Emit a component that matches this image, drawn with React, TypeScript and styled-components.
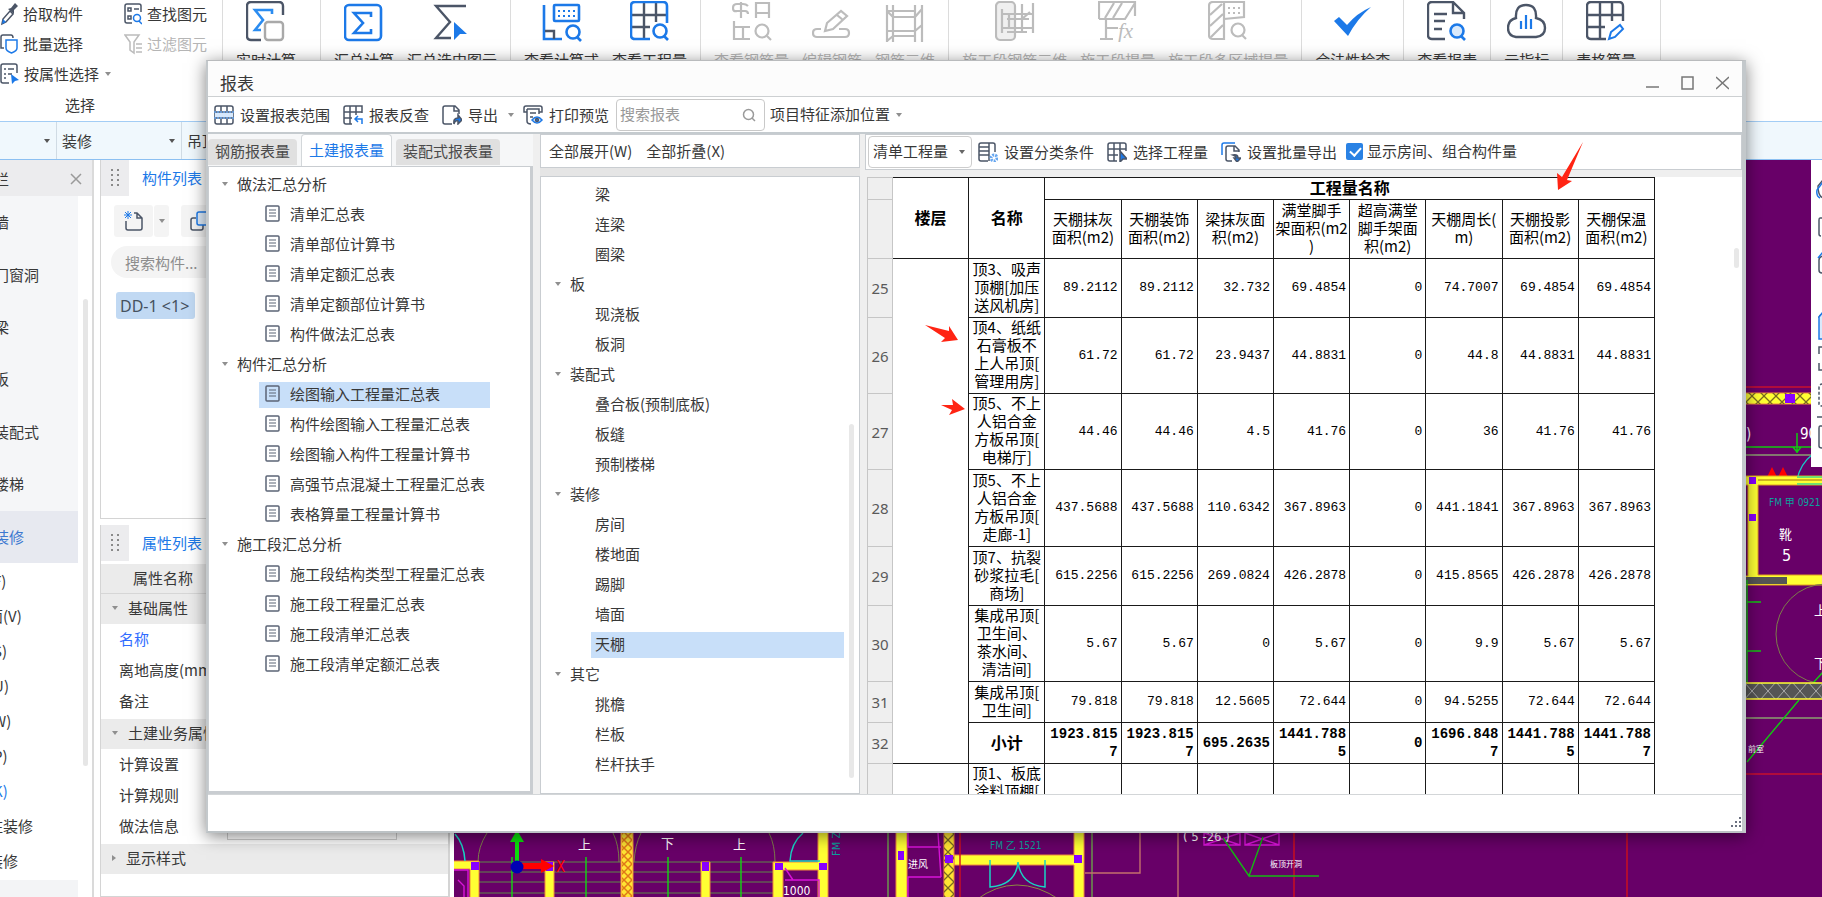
import React from "react";
import styled, { createGlobalStyle, css } from "styled-components";

const ui = `"Noto Sans CJK SC", "Noto Sans", sans-serif`;
const mono = `"Liberation Mono", "Noto Sans CJK SC", monospace`;
const dark = "#4b5567";
const blue = "#1c79e8";
const grey = "#bcbcbc";

const GlobalStyle = createGlobalStyle`
  * { box-sizing: border-box; }
  body { margin: 0; font-family: ${ui}; font-size: 15px; line-height: 20px; color: #383838; background: #fff; overflow: hidden; }
  button, input, select { font: inherit; color: inherit; margin: 0; }
  ul { list-style: none; margin: 0; padding: 0; }
`;

/* ---------- shared parts ---------- */

const Page = styled.div`
  position: relative;
  display: flex;
  flex-direction: column;
  min-height: 100vh;
  overflow: hidden;
`;

const PlainButton = styled.button`
  display: flex;
  align-items: center;
  padding: 0;
  border: 0;
  background: none;
  white-space: nowrap;
`;

const Caret = styled.span<{ $right?: boolean; $color?: string }>`
  flex: none;
  width: 0;
  height: 0;
  margin: 0 1px;
  border: 3px solid transparent;
  ${(p) =>
    p.$right
      ? css`border-left: 4px solid ${p.$color ?? "#8f8f8f"}; border-right: 0;`
      : css`border-top: 4px solid ${p.$color ?? "#8f8f8f"}; border-bottom: 0;`}
`;

const Svg = styled.svg`
  display: block;
  flex: none;
  fill: none;
  stroke-width: 1.5;
`;

/* ---------- ribbon ---------- */

const Ribbon = styled.header`
  display: flex;
  height: 121px;
  background: #fff;
  white-space: nowrap;
`;

const SelectGroup = styled.section`
  flex: none;
  width: 223px;
  border-right: 1px solid #dcdcdc;
`;

const SelectGrid = styled.div`
  display: grid;
  grid-template-columns: 124px 1fr;
  grid-auto-rows: 30px;
  overflow: hidden;
`;

const SmallTool = styled(PlainButton)<{ $muted?: boolean }>`
  gap: 5px;
  padding-bottom: 3px;
  color: ${(p) => (p.$muted ? "#b5b5b5" : "#383838")};
`;

const GroupCaption = styled.div`
  margin-right: 62px;
  line-height: 30px;
  text-align: center;
`;

const RibbonGroup = styled.section<{ $wide?: boolean }>`
  display: flex;
  gap: 13px;
  padding: 1px ${(p) => (p.$wide ? 24 : 13)}px 0 13px;
  border-right: 1px solid #dcdcdc;
`;

const BigTool = styled(PlainButton)<{ $muted?: boolean }>`
  flex-direction: column;
  gap: 8px;
  height: 72px;
  justify-content: flex-start;
  color: ${(p) => (p.$muted ? "#b5b5b5" : "#383838")};
`;

const OptionBar = styled.div`
  display: flex;
  height: 39px;
  border-top: 1px solid #a3cdf5;
  border-bottom: 1px solid #8cc0f2;
  background: #f0f8fd;
`;

const Combo = styled(PlainButton)<{ $width: number }>`
  justify-content: space-between;
  width: ${(p) => p.$width}px;
  padding: 0 5px 0 5px;
  border-right: 1px solid #d0dbe4;
`;

/* ---------- ribbon icons ---------- */

const ribbonIcons: Record<string, React.ReactNode> = {
  live: (
    <>
      <path d="M37 14V5q0-4-4-4H5Q1 1 1 5v30q0 4 4 4h10" stroke={dark} strokeWidth="2.4" />
      <path d="M26 13V9H9l8 10-8 10h6" stroke="#2b8cf0" strokeWidth="2.6" />
      <rect x="19" y="21" width="18" height="18" rx="3" stroke="#a9a9a9" strokeWidth="2.4" />
    </>
  ),
  sum: (
    <>
      <rect x="1" y="4" width="36" height="35" rx="4" stroke={blue} strokeWidth="2.6" />
      <path d="M27 16v-4H10l9 10-9 10h17v-4" stroke={blue} strokeWidth="2.6" />
    </>
  ),
  sumPick: (
    <>
      <path d="M34 5H4l14 16L4 37h15" stroke={dark} strokeWidth="2.4" />
      <path d="M22 21l13 12-7 0-6 6z" fill={blue} />
    </>
  ),
  formula: (
    <>
      <path d="M2 4v34h18" stroke={blue} strokeWidth="2.6" />
      <path d="M3 30h9v8" stroke={dark} strokeWidth="2.4" />
      <rect x="12" y="4" width="25" height="16" rx="1" stroke={blue} strokeWidth="2.6" />
      <path d="M16 10h18M16 15h18" stroke={blue} strokeWidth="2" strokeDasharray="2 3" />
      <circle cx="31" cy="31" r="6.5" stroke={blue} strokeWidth="2.6" />
      <path d="M35 36l4 4" stroke={blue} strokeWidth="2.6" />
    </>
  ),
  quantity: (
    <>
      <path d="M14 2v36M26 2v19M2 14h35M2 26h18" stroke={dark} strokeWidth="2.4" />
      <path d="M37 22V5q0-4-4-4H5Q1 1 1 5v29q0 4 4 4h15" stroke={blue} strokeWidth="2.6" />
      <circle cx="30" cy="30" r="6.5" stroke={blue} strokeWidth="2.6" />
      <path d="M34 35l4 4" stroke={blue} strokeWidth="2.6" />
    </>
  ),
  rebar: (
    <g stroke={grey} strokeWidth="2.2">
      <path d="M9 1v16M16 5Q14 3 11 3H5Q1 3 1 7t4 3h8q3 0 3 3M24 17V2h13v15M24 12h13M2 20v18h16M2 26h16M11 26v12" />
      <circle cx="30" cy="30" r="6.5" />
      <path d="M35 35l4 4" />
    </g>
  ),
  editBar: (
    <g stroke={grey} strokeWidth="2.2">
      <path d="M13 30l2-8L29 10l6 5-14 13zM25 14l6 5" />
      <path d="M9 28H5q-4 0-4 4t4 4h28q4 0 4-4t-4-4h-6" />
    </g>
  ),
  bar3d: (
    <g stroke={grey} strokeWidth="2.2">
      <path d="M2 4v37M8 4v37M30 4v37M37 4v37M2 10h28M8 16h22M2 30h28M8 35h22M30 16l7-8M8 35l-6 5M30 30l7-6M2 10l6 6" />
    </g>
  ),
  stage3d: (
    <g stroke={grey} strokeWidth="2.2">
      <rect x="1" y="1" width="19" height="38" rx="4" fill="#efefef" />
      <path d="M7 8v24M14 12v16M27 3v28M38 2v30M8 13h30M12 18h22M8 27h30M12 31h20M27 18l8-7" />
    </g>
  ),
  stageQty: (
    <>
      <g stroke={grey} strokeWidth="2.2">
        <path d="M1 18V1h36v14M1 18h26l10-16M7 17L16 2M15 17l9-15M8 18v20M8 27h12M2 38h13" />
      </g>
      <text x="20" y="37" fontFamily="Liberation Serif" fontStyle="italic" fontSize="21" fill={grey}>fx</text>
    </>
  ),
  region: (
    <g stroke={grey} strokeWidth="2.2">
      <path d="M16 1H5Q1 1 1 5v29q0 4 4 4h11zM2 14L14 3M2 25l13-12M3 36l12-12M16 1h20v15l-20 2" />
      <path d="M20 7h14M20 12h14" strokeDasharray="2 3" />
      <circle cx="30" cy="29" r="6.5" />
      <path d="M34 34l4 4" />
    </g>
  ),
  check: <path d="M1 20l5-4 8 8Q24 12 38 6 24 18 15 35z" fill={blue} />,
  report: (
    <>
      <path d="M37 18v-6L26 1H5Q1 1 1 5v29q0 4 4 4h13M26 2v10h10" stroke={dark} strokeWidth="2.4" />
      <path d="M7 13h13M7 20h11M7 28h8" stroke={dark} strokeWidth="2.4" />
      <circle cx="30" cy="30" r="6.5" stroke={blue} strokeWidth="2.6" fill="#d9e9fb" />
      <path d="M34 35l4 4" stroke={blue} strokeWidth="2.6" />
    </>
  ),
  cloud: (
    <>
      <path d="M9 36Q1 35 1 27t8-10Q8 4 19 4t10 13q9 2 9 10t-9 9z" stroke={dark} strokeWidth="2.4" />
      <path d="M14 28v-8M19 28V14M24 28V18" stroke={blue} strokeWidth="2.2" />
    </>
  ),
  sheet: (
    <>
      <path d="M37 20V5q0-4-4-4H5Q1 1 1 5v29q0 4 4 4h15M14 1v37M26 1v19M1 14h36M1 26h18" stroke={dark} strokeWidth="2.4" />
      <path d="M23 38l2-7 9-7 3 4-8 8z" stroke={blue} strokeWidth="2" />
    </>
  ),
};

type Tool = [icon: string, label: string, muted?: boolean];
const ribbonGroups: { wide?: boolean; tools: Tool[] }[] = [
  { wide: true, tools: [["live", "实时计算"]] },
  { tools: [["sum", "汇总计算"], ["sumPick", "汇总选中图元"]] },
  { tools: [["formula", "查看计算式"], ["quantity", "查看工程量"]] },
  { tools: [["rebar", "查看钢筋量", true], ["editBar", "编辑钢筋", true], ["bar3d", "钢筋三维", true]] },
  { tools: [["stage3d", "施工段钢筋三维", true], ["stageQty", "施工段提量", true], ["region", "施工段多区域提量", true]] },
  { tools: [["check", "合法性检查"]] },
  { tools: [["report", "查看报表"]] },
  { tools: [["cloud", "云指标"]] },
  { wide: true, tools: [["sheet", "表格算量"]] },
];

function RibbonBar() {
  return (
    <Ribbon>
      <SelectGroup>
        <SelectGrid>
          <SmallTool>
            <Svg width="18" height="24">
              <path d="M2 22l1-5 7-8 3 3-7 8z" stroke={dark} />
              <path d="M8 7l3-1 4-5 3 3-4 4v4z" fill={dark} />
              <path d="M2 22l1-5 3 3z" fill={blue} />
            </Svg>
            拾取构件
          </SmallTool>
          <SmallTool>
            <Svg width="18" height="24">
              <path d="M17 10V4q0-2-2-2H3Q1 2 1 4v15q0 2 2 2h5" stroke={dark} />
              <path d="M4 6h3v3H4zM4 14h3v3H4zM10 7h5" stroke={dark} />
              <circle cx="13" cy="16" r="3.5" stroke={blue} />
              <path d="M15 19l3 3" stroke={blue} />
            </Svg>
            查找图元
          </SmallTool>
          <SmallTool>
            <Svg width="18" height="24">
              <path d="M4 16H1V5q0-2 2-2h8q2 0 2 3" stroke={dark} />
              <path d="M6 8h11v8q0 3-5.500 5Q6 19 6 16z" stroke={blue} />
            </Svg>
            批量选择
          </SmallTool>
          <SmallTool $muted>
            <Svg width="18" height="24">
              <path d="M1 3h14l-5 7v11l-4-3v-8zM12 12h6M12 16h6M12 20h6" stroke={grey} />
            </Svg>
            过滤图元
          </SmallTool>
          <SmallTool>
            <Svg width="19" height="24">
              <path d="M17 11V4q0-2-2-2H3Q1 2 1 4v15q0 2 2 2h6M4 7h2M8 7h6M4 12h2M8 12h4M4 16h2" stroke={dark} />
              <path d="M11 12l8 6-4 1-3 3z" fill={blue} />
            </Svg>
            按属性选择
            <Caret />
          </SmallTool>
        </SelectGrid>
        <GroupCaption>选择</GroupCaption>
      </SelectGroup>
      {ribbonGroups.map((group, i) => (
        <RibbonGroup key={i} $wide={group.wide}>
          {group.tools.map(([icon, label, muted]) => (
            <BigTool key={label} $muted={muted}>
              <Svg width="40" height="41">{ribbonIcons[icon]}</Svg>
              {label}
            </BigTool>
          ))}
        </RibbonGroup>
      ))}
    </Ribbon>
  );
}

/* ---------- workspace behind the dialog ---------- */

const Workspace = styled.div`
  display: flex;
  flex: 1;
  min-height: 0;
`;

const Nav = styled.nav`
  flex: none;
  display: flex;
  flex-direction: column;
  width: 94px;
  border-right: 2px solid #dadada;
  overflow: hidden;
`;

const PanelHead = styled.div`
  display: flex;
  align-items: center;
  height: 36px;
  background: #ececee;
`;

const NavHead = styled(PanelHead)`
  justify-content: space-between;
  margin-left: -36px;
  padding-right: 10px;
  padding-top: 2px;
`;

const NavBody = styled.div`
  display: flex;
  flex: 1;
`;

const NavList = styled.div`
  display: flex;
  flex-direction: column;
  width: 78px;
`;

const Categories = styled.div`
  display: flex;
  flex-direction: column;
  height: 367px;
  background: #f5f6f8;
`;

const Category = styled(PlainButton)<{ $active?: boolean }>`
  flex: 1;
  text-indent: -6px;
  color: ${(p) => (p.$active ? "#3c78d0" : "#383838")};
  background: ${(p) => (p.$active ? "#e7e9f0" : "none")};
`;

const SubList = styled.div`
  flex: none;
  padding: 0 0 2px;
  margin-left: -42px;
`;

const SubItem = styled(PlainButton)<{ $active?: boolean }>`
  height: 35px;
  color: ${(p) => (p.$active ? "#1c79e8" : "#383838")};
`;

const NavFoot = styled.div`
  flex: 1;
  background: #f3f4f6;
`;

const NavScroll = styled.div`
  width: 5px;
  height: 467px;
  margin: 103px 0 0 5px;
  border-radius: 3px;
  background: #e6e6e6;
`;

const Side = styled.aside`
  flex: none;
  display: flex;
  flex-direction: column;
  gap: 6px;
  width: 350px;
  margin: 0 4px 0 6px;
`;

const Panel = styled.section<{ $height?: number }>`
  ${(p) => (p.$height ? `height: ${p.$height}px;` : "flex: 1;")}
  border: 1px solid #d4d4d4;
  border-right-width: 2px;
  border-top: 0;
`;

const Grip = styled.div`
  display: flex;
  justify-content: center;
  align-items: center;
  width: 28px;
  height: 36px;
  background: #ececee;
`;

const PanelTabs = styled.div`
  display: flex;
  color: #1c79e8;
`;

const PanelTab = styled.div`
  padding: 8px 13px;
`;

const PartTools = styled.div`
  display: flex;
  gap: 12px;
  padding: 9px 0 9px 13px;
`;

const PartButtons = styled.div`
  display: flex;
  gap: 1px;
`;

const PartButton = styled(PlainButton)<{ $width: number }>`
  justify-content: center;
  width: ${(p) => p.$width}px;
  height: 32px;
  border-radius: 3px;
  background: #f4f4f4;
`;

const PartSearch = styled.input`
  display: block;
  width: 300px;
  height: 32px;
  margin-left: 10px;
  padding: 0 14px;
  border: 0;
  border-radius: 16px;
  background: #f4f4f4;
  &::placeholder { color: #8d8d8d; opacity: 1; }
`;

const PartChip = styled(PlainButton)`
  height: 27px;
  margin: 14px 0 0 15px;
  padding: 0 6px 0 4px;
  border-radius: 3px;
  font-family: "Noto Sans", sans-serif;
  font-size: 16px;
  color: #46525f;
  background: #c1d9f3;
`;

const PropHead = styled.div`
  height: 30px;
  margin-top: 3px;
  padding-left: 32px;
  line-height: 27px;
  background: #ebebeb;
  border-bottom: 1px solid #d6d6d6;
`;

const PropGroup = styled.div`
  display: flex;
  align-items: center;
  gap: 9px;
  height: 30px;
  padding: 0 0 2px 10px;
  background: #ebebeb;
`;

const PropBody = styled.div`
  padding: 1px 0;
`;

const PropRow = styled.div<{ $link?: boolean }>`
  display: flex;
  height: 31px;
  padding-left: 18px;
  line-height: 28px;
  white-space: nowrap;
  color: ${(p) => (p.$link ? "#2f6bff" : "#383838")};
`;

const PropLabel = styled.label`
  width: 108px;
`;

const PropInput = styled.input`
  width: 170px;
  height: 28px;
  padding: 0 4px;
  border: 1px solid #cfcfcf;
  background: #fff;
`;

const Canvas = styled.main`
  position: relative;
  flex: 1;
  overflow: hidden;
  background: #680068;
`;

const Drawing = styled.svg`
  position: absolute;
  left: 0;
  top: 0;
  fill: none;
`;

const ViewTools = styled.div`
  position: absolute;
  right: 0;
  top: 0;
  width: 11px;
  height: 307px;
  background: #fff;
`;

function GripDots() {
  return (
    <Grip>
      <Svg width="10" height="18">
        {[0, 5, 10, 15].map((y) => (
          <path key={y} d={`M1 ${y}h2v2h-2zM7 ${y}h2v2h-2z`} fill="#8a8a8a" />
        ))}
      </Svg>
    </Grip>
  );
}

function CadDrawing() {
  const Y = "#ffff33";
  const P = "#8800ff";
  return (
    <Drawing width="1368" height="737" viewBox="454 160 1368 737">
      <defs>
        <pattern id="cross" width="12" height="12" patternUnits="userSpaceOnUse">
          <path d="M0 0l12 12M12 0L0 12" stroke="#7a6a20" strokeWidth="1.3" />
        </pattern>
        <pattern id="crossGrey" width="16" height="18" y="682" patternUnits="userSpaceOnUse">
          <path d="M0 0l16 18M16 0L0 18" stroke="#a8a8a8" strokeWidth="1" />
        </pattern>
        <pattern id="dots" width="8" height="8" patternUnits="userSpaceOnUse">
          <path d="M0 0l8 8M8 0L0 8" stroke="#e07818" strokeWidth="1.5" />
        </pattern>
      </defs>

      {/* stairs */}
      <path d="M479 862h296M479 872h296M479 882h296M479 893h296" stroke="#5f8748" />
      <path d="M512 857v40M586 857v40M668 857v40M741 857v40" stroke="#12d812" strokeWidth="1.4" />
      <path d="M487 833q-9 14-9 29M613 833q6 12 6 29M641 833q-6 12-7 29M769 833q6 12 6 29" stroke="#7d7d4a" />

      {/* walls */}
      <g stroke="#f08a3c">
        <path d="M450 861h29v40h-9v-32h-20z" fill={Y} />
        <path d="M545 862h9v40h-9zM701 862h9v40h-9z" fill={Y} />
        <path d="M818 828h10v80h-10v-38h-35v38h-10v-46h45z" fill={Y} />
        <path d="M896 828h11v80h-11z" fill={Y} />
        <path d="M954 855h120v-30h10v80h-10v-40h-120z" fill={Y} />
        <path d="M621 828h12v80h-12zM944 828h10v80h-10z" fill="#ffe433" />
      </g>
      <path d="M622 828h10v80h-10z" fill="url(#dots)" />
      <path d="M944 828h10v80h-10z" fill="url(#cross)" />
      <path
        d="M471 862h8v8h-8zM546 862h7v9h-7zM702 862h7v9h-7zM775 863h8v7h-8zM819 863h8v7h-8zM898 851h6v9h-6zM945 855h8v8h-8zM1074 855h8v8h-8z"
        fill={P}
      />

      {/* doors and rooms */}
      <path d="M455 834q9 10 10 27M803 833q-12 10-13 28h30M990 860v27q26-2 28-25 3 23 27 25v-27" stroke="#18d4c4" strokeWidth="1.5" />
      <path d="M976 900q40-30 84 0" stroke="#8b8b40" />
      <path d="M454 870h14v30M458 880l6 6v12M785 880h34v20M785 868l8 12M908 833v14h33M908 897v-20h33M938 833l3 44M1204 833v12h36v-12l-36 12 36 0-36-12M1245 833v12h34v-12l-34 12 34 0-34-12" stroke="#d813d8" strokeWidth="1.4" />
      <path d="M888 833v64M1092 833v64" stroke="#6ba04c" strokeWidth="1.4" />
      <path d="M1085 873h55v-40M1178 833v64" stroke="#c4706c" strokeWidth="1.4" />
      <path d="M960 833v64M1294 833v64M1627 833v64" stroke="#d0101c" strokeWidth="1.4" />
      <path d="M1223 838l26 38 14-39M1249 876h70" stroke="#14b814" strokeWidth="1.4" />

      {/* axis marker */}
      <path d="M515 862v-20h-5l7-12 7 12h-5v20z" fill="#0be00b" />
      <path d="M522 863h19v-4l13 7-13 7v-4h-19z" fill="#f00" />
      <circle cx="517" cy="867" r="6.500" fill="#0000b4" />

      {/* wing on the right */}
      <path d="M1746 387h76M1746 774h76" stroke="#c8102e" strokeWidth="1.6" />
      <path d="M1740 393h90v11h-90z" fill={Y} stroke="#f08a3c" />
      <path d="M1740 393h90v11h-90z" fill="url(#cross)" />
      <path d="M1746 447h76M1797 433v20M1793 447l8 0-4 5z" stroke="#12c812" strokeWidth="1.5" />
      <path d="M1746 455h76M1746 718h76" stroke="#8aa070" strokeWidth="1.4" />
      <path d="M1797 480q3-16 16-26" stroke="#18c8c8" strokeWidth="1.4" />
      <path d="M1767 477l5-10 5 10zM1778 477l5-10 5 10z" fill="#f00" />
      <path d="M1740 476h90v9h-72v90h72v10h-90v-9h8v-91h-8z" fill={Y} stroke="#e0a020" />
      <path d="M1758 480h64" stroke="#a06a10" />
      <path d="M1797 477h25M1797 484h25" stroke="#70e070" strokeWidth="2" />
      <path d="M1746 577h41v7h-41z" fill="#555" />
      <path d="M1749 477h7v7h-7zM1749 514h7v7h-7zM1785 394h10v9h-10z" fill={P} />
      <circle cx="1826" cy="634" r="50" stroke="#7d7d4a" />
      <path d="M1747 580v104M1747 602h14M1747 651h14M1799 700l-52 62M1813 683l10-11" stroke="#12c812" strokeWidth="1.4" />
      <path d="M1740 683h90v16h-90z" fill="#555" />
      <path d="M1740 683h90v16h-90z" fill="url(#crossGrey)" />
      <path d="M1740 683h90M1740 699h90" stroke={Y} strokeWidth="1.6" />

      <g fontFamily='"Liberation Sans Narrow", "DejaVu Sans Condensed", "Noto Sans CJK SC"' fontSize="13" fill="#fff">
        <text x="578" y="849">上</text>
        <text x="661" y="848">下</text>
        <text x="733" y="849">上</text>
        <text x="556" y="872" fill="#f00" fontSize="15">X</text>
        <text x="783" y="895" fontSize="12">1000</text>
        <text x="908" y="868" fontSize="10">进风</text>
        <text x="1183" y="841">( 5 -26 )</text>
        <text x="1270" y="867" fontSize="8">板顶开洞</text>
        <text x="990" y="849" fontSize="10" fill="#0aa09c">FM 乙 1521</text>
        <text x="1746" y="439" fontSize="15">)</text>
        <text x="1800" y="439" fontSize="15">90</text>
        <text x="1769" y="506" fontSize="10" fill="#0aa09c">FM 甲 0921</text>
        <text x="1779" y="539">靴</text>
        <text x="1782" y="561" fontSize="16">5</text>
        <text x="1814" y="615">上</text>
        <text x="1814" y="668">下</text>
        <text x="1748" y="752" fontSize="8">前室</text>
        <text x="0" y="0" fontSize="11" fill="#0aa09c" transform="translate(840 856) rotate(-90)">FM Z</text>
      </g>
    </Drawing>
  );
}

function WorkspaceArea() {
  const categories = ["墙", "门窗洞", "梁", "板", "装配式", "楼梯", "装修"];
  const subs = ["房间(F)", "楼地面(V)", "踢脚(S)", "墙裙(U)", "墙面(W)", "天棚(P)", "吊顶(K)", "独立柱装修", "单梁装修"];
  return (
    <Workspace>
      <Nav>
        <NavHead>
          导航栏
          <Svg width="12" height="12" stroke="#9a9a9a"><path d="M1 1l10 10M11 1L1 11" /></Svg>
        </NavHead>
        <NavBody>
          <NavList>
            <Categories>
              {categories.map((c) => <Category key={c} $active={c === "装修"}>{c}</Category>)}
            </Categories>
            <SubList>
              {subs.map((s) => <SubItem key={s} $active={s === "吊顶(K)"}>{s}</SubItem>)}
            </SubList>
            <NavFoot />
          </NavList>
          <NavScroll />
        </NavBody>
      </Nav>
      <Side>
        <Panel $height={359}>
          <PanelTabs><GripDots /><PanelTab>构件列表</PanelTab></PanelTabs>
          <PartTools>
            <PartButtons>
              <PartButton $width={39} aria-label="新建">
                <Svg width="20" height="22" stroke={dark}>
                  <path d="M2 11v7q0 2 2 2h12q2 0 2-2V8l-5-5h-3M13 3v5h5" />
                  <path d="M1 2l6 6M7 2L1 8M4 1v8M0 5h8" stroke={blue} strokeWidth="1" />
                </Svg>
              </PartButton>
              <PartButton $width={15} aria-label="更多"><Caret /></PartButton>
            </PartButtons>
            <PartButton $width={39} aria-label="复制">
              <Svg width="22" height="22" stroke={dark}>
                <path d="M6 8H3Q1 8 1 10v8q0 2 2 2h8q2 0 2-2v-3" />
                <rect x="7" y="2" width="13" height="13" rx="2" stroke={blue} fill="#e1eefc" />
              </Svg>
            </PartButton>
          </PartTools>
          <PartSearch placeholder="搜索构件..." aria-label="搜索构件" />
          <PartChip>DD-1 &lt;1&gt;</PartChip>
        </Panel>
        <Panel>
          <PanelTabs><GripDots /><PanelTab>属性列表</PanelTab></PanelTabs>
          <PropHead>属性名称</PropHead>
          <PropGroup><Caret />基础属性</PropGroup>
          <PropBody>
            <PropRow $link>名称</PropRow>
            <PropRow>离地高度(mm)</PropRow>
            <PropRow>备注</PropRow>
          </PropBody>
          <PropGroup><Caret />土建业务属性</PropGroup>
          <PropBody>
            <PropRow>计算设置</PropRow>
            <PropRow>计算规则</PropRow>
            <PropRow>
              <PropLabel htmlFor="method">做法信息</PropLabel>
              <PropInput id="method" />
            </PropRow>
          </PropBody>
          <PropGroup><Caret $right />显示样式</PropGroup>
        </Panel>
      </Side>
      <Canvas>
        <CadDrawing />
        <ViewTools>
          <Svg width="11" height="307" stroke={dark}>
            <path d="M12 20L7 26q0 10 5 12" />
            <path d="M12 22L6 30q-1 6 3 8" stroke={blue} />
            <path d="M12 58H9q-1 0-1 2v14q0 2 2 2M12 96q-4 1-4 4v10q0 3 3 3M12 154q-4 1-4 4" />
            <path d="M7 98l5-6M8 157l4-5v27H8z" stroke={blue} fill="#d9e9fb" />
            <path d="M12 187H8v7M8 203v7h4" />
            <path d="M12 224q-4 0-4 4v16q0 2 3 2" strokeDasharray="3 2" />
            <path d="M6 257h6M12 266H9q-1 0-1 2v18q0 2 3 2" />
          </Svg>
        </ViewTools>
      </Canvas>
    </Workspace>
  );
}

/* ---------- report dialog ---------- */

const Dialog = styled.section`
  position: absolute;
  left: 206px;
  top: 60px;
  right: 76px;
  bottom: 64px;
  display: flex;
  flex-direction: column;
  border: 1px solid #b4b6b8;
  border-width: 1px 4px 2px 2px;
  border-color: #b9bbbd #c3c8cb #bcc2c5 #c3c8cb;
  background: #efefef;
  box-shadow: 0 3px 16px rgba(0, 0, 0, 0.5);
`;

const TitleBar = styled.header`
  display: flex;
  justify-content: space-between;
  height: 36px;
  padding: 12px 13px 0 12px;
  font-size: 17px;
  background: #fcfcfc;
  border-bottom: 1px solid #cdd0d2;
`;

const WindowButtons = styled.div`
  display: flex;
  gap: 22px;
`;

const WindowButton = styled(PlainButton)`
  width: 13px;
  height: 20px;
`;

const Toolbar = styled.div`
  display: flex;
  align-items: center;
  height: 37px;
  padding: 0 6px;
  background: #fff;
  border-bottom: 2px solid #c5cbcf;
`;

const ToolButton = styled(PlainButton)<{ $flush?: boolean }>`
  gap: 6px;
  margin-right: ${(p) => (p.$flush ? 0 : 13)}px;
`;

const DropButton = styled(PlainButton)<{ $width: number }>`
  justify-content: center;
  width: ${(p) => p.$width}px;
  height: 24px;
`;

const SearchBox = styled.label`
  position: relative;
  display: block;
  width: 149px;
  height: 32px;
  margin: 0 5px 0 -6px;
`;

const SearchInput = styled.input`
  width: 100%;
  height: 32px;
  padding: 0 28px 2px 3px;
  border: 1px solid #c9c9c9;
  border-radius: 4px;
  background: #fff;
  &::placeholder { color: #999; opacity: 1; }
`;

const SearchGlyph = styled(Svg)`
  position: absolute;
  right: 9px;
  top: 9px;
`;

const FeatureButton = styled(PlainButton)`
  padding-bottom: 2px;
`;

const Body = styled.div`
  display: flex;
  flex: 1;
  min-height: 0;
`;

const TreeColumn = styled.div`
  flex: none;
  display: flex;
  flex-direction: column;
  width: 325px;
`;

const Tabs = styled.div`
  display: flex;
  align-items: flex-end;
  gap: 4px;
  height: 32px;
  background: #f6f7f8;
`;

const Tab = styled.button<{ $active?: boolean }>`
  height: ${(p) => (p.$active ? 32 : 26)}px;
  margin-bottom: ${(p) => (p.$active ? 0 : 1)}px;
  padding: 0 7px 2px;
  border: ${(p) => (p.$active ? "1px solid #d3d7da" : "0")};
  border-width: ${(p) => (p.$active ? "1px 1px 0" : "0")};
  border-radius: 4px 4px 0 0;
  white-space: nowrap;
  color: ${(p) => (p.$active ? "#1c79e8" : "#4a4a4a")};
  background: ${(p) => (p.$active ? "#fff" : "#e0e0e0")};
`;

const TreePane = styled.div`
  flex: 1;
  min-height: 0;
  padding-top: 3px;
  background: #fff;
  border: 1px solid #c9cdd1;
  border-width: 1px 3px 3px 1px;
`;

const TreeGroup = styled.li<{ $indent: number }>`
  display: flex;
  align-items: center;
  gap: 8px;
  height: 30px;
  padding: 0 0 2px ${(p) => p.$indent}px;
`;

const TreeLeaf = styled.li`
  display: flex;
  align-items: center;
  height: 30px;
  padding-left: 50px;
`;

const LeafButton = styled(PlainButton)<{ $active?: boolean; $width: number; $pad: number }>`
  gap: 10px;
  width: ${(p) => p.$width}px;
  height: 26px;
  padding: 0 0 2px ${(p) => p.$pad}px;
  background: ${(p) => (p.$active ? "#c8dff9" : "none")};
`;

const PartColumn = styled.div`
  flex: none;
  display: flex;
  flex-direction: column;
  width: 320px;
  margin: 0 5px 0 7px;
  background: #e5e5e5;
`;

const FoldBar = styled.div`
  display: flex;
  gap: 14px;
  height: 34px;
  margin-bottom: 8px;
  padding: 0 8px;
  background: #fff;
  border: 1px solid #c9cdd1;
`;

const PartPane = styled.div`
  display: flex;
  flex: 1;
  min-height: 0;
  overflow: hidden;
  padding-top: 3px;
  background: #fff;
  border: 1px solid #c9cdd1;
`;

const PartList = styled.ul`
  flex: 1;
`;

const PartThumb = styled.div`
  width: 5px;
  height: 354px;
  margin: 244px 5px 0 0;
  border-radius: 3px;
  background: #e8e8e8;
`;

const ReportColumn = styled.div`
  display: flex;
  flex: 1;
  flex-direction: column;
  min-width: 0;
`;

const ReportTools = styled.div`
  display: flex;
  align-items: center;
  height: 36px;
  margin-bottom: 7px;
  padding: 0 2px;
  background: #fff;
  border: 1px solid #c9cdd1;
  white-space: nowrap;
`;

const SelectBox = styled.div`
  position: relative;
  width: 104px;
  margin-right: 6px;
`;

const NativeSelect = styled.select`
  width: 100%;
  height: 32px;
  padding: 0 0 2px 4px;
  border: 1px solid #cdcdcd;
  border-radius: 4px;
  background: #fff;
  appearance: none;
`;

const SelectCaret = styled(Caret)`
  position: absolute;
  right: 6px;
  top: 14px;
`;

const CheckLabel = styled.label`
  display: flex;
  align-items: center;
  gap: 4px;
  margin-left: -4px;
  padding-bottom: 2px;
`;

const Checkbox = styled.input`
  position: relative;
  width: 17px;
  height: 17px;
  border-radius: 2px;
  background: #2a82e4;
  appearance: none;
  &::after {
    content: "";
    position: absolute;
    left: 6px;
    top: 2px;
    width: 5px;
    height: 9px;
    border: solid #fff;
    border-width: 0 2px 2px 0;
    transform: rotate(42deg);
  }
`;

const ReportPane = styled.div`
  display: flex;
  flex: 1;
  align-items: flex-start;
  justify-content: space-between;
  min-height: 0;
  margin-left: 2px;
  overflow: hidden;
  background: #fff;
`;

const ReportThumb = styled.div`
  width: 5px;
  height: 20px;
  margin: 71px 3px 0 0;
  border-radius: 3px;
  background: #e8e8e8;
`;

const Table = styled.table`
  width: 788px;
  table-layout: fixed;
  border-collapse: separate;
  border-spacing: 0;
  font-size: 15px;
  line-height: 18px;
  color: #000;
`;

const cell = css`
  padding: 0 0 3px;
  border: solid #1a1a1a;
  border-width: 0 1px 1px 0;
  text-align: center;
  white-space: pre;
`;

const Row = styled.tr<{ $height: number }>`
  height: ${(p) => p.$height}px;
`;

const Index = styled.th`
  padding: 0;
  border: solid #c6c6c6;
  border-width: 0 1px 1px 1px;
  font: 15px "Noto Sans", sans-serif;
  color: #5a5a5a;
  background: #efefef;
`;

const HeadCell = styled.th<{ $top?: boolean; $big?: boolean }>`
  ${cell}
  border-top-width: ${(p) => (p.$top ? 1 : 0)}px;
  font-size: ${(p) => (p.$big ? 16 : 15)}px;
  font-weight: ${(p) => (p.$big ? 700 : 400)};
`;

const NameCell = styled.td<{ $total?: boolean; $upper?: boolean }>`
  ${cell}
  font-size: ${(p) => (p.$total ? 16 : 15)}px;
  font-weight: ${(p) => (p.$total ? 700 : 400)};
  vertical-align: ${(p) => (p.$upper ? "top" : "middle")};
`;

const NumberCell = styled.td<{ $total?: boolean }>`
  ${cell}
  padding: 0 3px 0 2px;
  font-family: ${mono};
  font-size: ${(p) => (p.$total ? 14 : 13)}px;
  font-weight: ${(p) => (p.$total ? 700 : 400)};
  text-align: right;
  white-space: normal;
  word-break: break-all;
`;

const StatusBar = styled.footer`
  display: flex;
  justify-content: flex-end;
  align-items: flex-end;
  height: 37px;
  padding: 0 0 3px;
  background: #fff;
  border-top: 1px solid #d3d6d8;
`;

const Annotations = styled.svg`
  position: absolute;
  left: 0;
  top: 0;
  width: 100%;
  height: 100%;
  fill: #ff2413;
  pointer-events: none;
`;

const toolIcons: Record<string, React.ReactNode> = {
  range: (
    <>
      <rect x="1" y="1" width="18" height="18" rx="2" />
      <path d="M7 1v18M13 1v18" />
      <path d="M0 7h20v6H0z" fill="#d6e8fc" />
      <path d="M0 7h20M0 13h20" stroke="#6aa8f0" strokeDasharray="2 1" />
    </>
  ),
  trace: (
    <>
      <path d="M19 8V1H3Q1 1 1 3v14q0 2 2 2h6M1 7h18M1 13h8M7 1v18M13 1v9" />
      <path d="M19 19v-5h-7M15 11l-3 3 3 3" stroke={blue} />
    </>
  ),
  exportFile: (
    <>
      <path d="M17 9V5l-4-4H3Q1 1 1 3v14q0 2 2 2h7M12 1v5h5" />
      <path d="M12 19q-1-6 4-6v-3l4 5-4 4v-3q-3-1-4 3z" fill={blue} />
    </>
  ),
  print: (
    <>
      <path d="M4 7H1V3q0-2 2-2h14q2 0 2 2v4h-3M4 4h12v5M4 4v12q0 3 4 3M7 8h6M7 12h3" />
      <path d="M9 15q5-6 10 0-5 6-10 0z" stroke={blue} fill="#d9e9fb" />
      <circle cx="14" cy="15" r="1.500" fill={blue} />
    </>
  ),
  classify: (
    <>
      <path d="M17 10V3q0-2-2-2H3Q1 1 1 3v14q0 2 2 2h7M1 5h10M1 9h10M1 13h10M11 1v18" />
      <circle cx="16" cy="16" r="3" stroke="#67a7f0" strokeWidth="3" strokeDasharray="2 1" />
    </>
  ),
  pick: (
    <>
      <path d="M19 9V3q0-2-2-2H3Q1 1 1 3v14q0 2 2 2h7M1 7h18M1 13h10M7 1v18M13 1v8" />
      <path d="M13 9l7 8-4 0-3 3z" fill={blue} />
    </>
  ),
  batch: (
    <>
      <path d="M1 13V3q0-2 2-2h11" stroke={blue} />
      <path d="M18 10V8l-4-4H7Q5 4 5 6v11q0 2 2 2h4M13 4v5h5" />
      <path d="M12 13q5-1 5 3h3l-4 4-3-4h2q0-2-3-3z" fill={blue} />
    </>
  ),
};

function ToolIcon({ name }: { name: string }) {
  return <Svg width="20" height="20" stroke={dark}>{toolIcons[name]}</Svg>;
}

const reportTree: [string, string[]][] = [
  ["做法汇总分析", ["清单汇总表", "清单部位计算书", "清单定额汇总表", "清单定额部位计算书", "构件做法汇总表"]],
  ["构件汇总分析", ["绘图输入工程量汇总表", "构件绘图输入工程量汇总表", "绘图输入构件工程量计算书", "高强节点混凝土工程量汇总表", "表格算量工程量计算书"]],
  ["施工段汇总分析", ["施工段结构类型工程量汇总表", "施工段工程量汇总表", "施工段清单汇总表", "施工段清单定额汇总表"]],
];

const partTree: [string, string[]][] = [
  ["", ["梁", "连梁", "圈梁"]],
  ["板", ["现浇板", "板洞"]],
  ["装配式", ["叠合板(预制底板)", "板缝", "预制楼梯"]],
  ["装修", ["房间", "楼地面", "踢脚", "墙面", "天棚"]],
  ["其它", ["挑檐", "栏板", "栏杆扶手"]],
];

const columns = [
  "天棚抹灰\n面积(m2)", "天棚装饰\n面积(m2)", "梁抹灰面\n积(m2)", "满堂脚手\n架面积(m2\n)",
  "超高满堂\n脚手架面\n积(m2)", "天棚周长(\nm)", "天棚投影\n面积(m2)", "天棚保温\n面积(m2)",
];

const rows: { no: number; name: string; height: number; total?: boolean; values: string[] }[] = [
  { no: 25, name: "顶3、吸声\n顶棚[加压\n送风机房]", height: 59, values: ["89.2112", "89.2112", "32.732", "69.4854", "0", "74.7007", "69.4854", "69.4854"] },
  { no: 26, name: "顶4、纸纸\n石膏板不\n上人吊顶[\n管理用房]", height: 76, values: ["61.72", "61.72", "23.9437", "44.8831", "0", "44.8", "44.8831", "44.8831"] },
  { no: 27, name: "顶5、不上\n人铝合金\n方板吊顶[\n电梯厅]", height: 76, values: ["44.46", "44.46", "4.5", "41.76", "0", "36", "41.76", "41.76"] },
  { no: 28, name: "顶5、不上\n人铝合金\n方板吊顶[\n走廊-1]", height: 77, values: ["437.5688", "437.5688", "110.6342", "367.8963", "0", "441.1841", "367.8963", "367.8963"] },
  { no: 29, name: "顶7、抗裂\n砂浆拉毛[\n商场]", height: 59, values: ["615.2256", "615.2256", "269.0824", "426.2878", "0", "415.8565", "426.2878", "426.2878"] },
  { no: 30, name: "集成吊顶[\n卫生间、\n茶水间、\n清洁间]", height: 76, values: ["5.67", "5.67", "0", "5.67", "0", "9.9", "5.67", "5.67"] },
  { no: 31, name: "集成吊顶[\n卫生间]", height: 41, values: ["79.818", "79.818", "12.5605", "72.644", "0", "94.5255", "72.644", "72.644"] },
  { no: 32, name: "小计", height: 41, total: true, values: ["1923.8157", "1923.8157", "695.2635", "1441.7885", "0", "1696.8487", "1441.7885", "1441.7887"] },
];

function ReportTable() {
  return (
    <Table>
      <colgroup>
        <col style={{ width: 26 }} />
        {Array.from({ length: 10 }, (_, i) => <col key={i} />)}
      </colgroup>
      <thead>
        <Row $height={23}>
          <Index style={{ borderTopWidth: 1 }} />
          <HeadCell rowSpan={2} $top $big>楼层</HeadCell>
          <HeadCell rowSpan={2} $top $big>名称</HeadCell>
          <HeadCell colSpan={8} $top $big>工程量名称</HeadCell>
        </Row>
        <Row $height={59}>
          <Index />
          {columns.map((c) => <HeadCell key={c}>{c}</HeadCell>)}
        </Row>
      </thead>
      <tbody>
        {rows.map((r, i) => (
          <Row key={r.no} $height={r.height}>
            <Index scope="row">{r.no}</Index>
            {i === 0 && <NameCell rowSpan={rows.length} />}
            <NameCell $total={r.total}>{r.name}</NameCell>
            {r.values.map((v, k) => <NumberCell key={k} $total={r.total}>{v}</NumberCell>)}
          </Row>
        ))}
        <Row $height={59}>
          <Index />
          <NameCell />
          <NameCell $upper>{"顶1、板底\n涂料顶棚["}</NameCell>
          {columns.map((c) => <NumberCell key={c} />)}
        </Row>
      </tbody>
    </Table>
  );
}

function ReportDialog() {
  return (
    <Dialog role="dialog" aria-label="报表">
      <TitleBar>
        报表
        <WindowButtons>
          <WindowButton aria-label="最小化"><Svg width="13" height="14" stroke="#777"><path d="M0 11h13" /></Svg></WindowButton>
          <WindowButton aria-label="最大化"><Svg width="13" height="14" stroke="#777"><path d="M1 1h11v12H1z" /></Svg></WindowButton>
          <WindowButton aria-label="关闭"><Svg width="13" height="14" stroke="#777"><path d="M0 1l13 12M13 1L0 13" /></Svg></WindowButton>
        </WindowButtons>
      </TitleBar>
      <Toolbar>
        <ToolButton><ToolIcon name="range" />设置报表范围</ToolButton>
        <ToolButton><ToolIcon name="trace" />报表反查</ToolButton>
        <ToolButton $flush><ToolIcon name="exportFile" />导出</ToolButton>
        <DropButton $width={25} aria-label="导出选项"><Caret /></DropButton>
        <ToolButton><ToolIcon name="print" />打印预览</ToolButton>
        <SearchBox>
          <SearchInput placeholder="搜索报表" aria-label="搜索报表" />
          <SearchGlyph width="14" height="14" stroke="#9a9a9a"><circle cx="6.500" cy="6.500" r="5" /><path d="M10 10l3 3" /></SearchGlyph>
        </SearchBox>
        <FeatureButton>项目特征添加位置</FeatureButton>
        <DropButton $width={18} aria-label="添加位置选项"><Caret /></DropButton>
      </Toolbar>
      <Body>
        <TreeColumn>
          <Tabs>
            <Tab>钢筋报表量</Tab>
            <Tab $active>土建报表量</Tab>
            <Tab>装配式报表量</Tab>
          </Tabs>
          <TreePane>
            <ul>
              {reportTree.map(([group, items]) => (
                <React.Fragment key={group}>
                  <TreeGroup $indent={12}><Caret />{group}</TreeGroup>
                  {items.map((item) => (
                    <TreeLeaf key={item}>
                      <LeafButton $width={231} $pad={6} $active={item === "绘图输入工程量汇总表"}>
                        <Svg width="15" height="18" stroke="#5b6475">
                          <rect x="1" y="1" width="13" height="15" rx="1" />
                          <path d="M4 5h7M4 8h7M4 11h7" strokeWidth="1.2" />
                        </Svg>
                        {item}
                      </LeafButton>
                    </TreeLeaf>
                  ))}
                </React.Fragment>
              ))}
            </ul>
          </TreePane>
        </TreeColumn>
        <PartColumn>
          <FoldBar>
            <PlainButton>全部展开(W)</PlainButton>
            <PlainButton>全部折叠(X)</PlainButton>
          </FoldBar>
          <PartPane>
            <PartList>
              {partTree.map(([group, items]) => (
                <React.Fragment key={group}>
                  {group && <TreeGroup $indent={13}><Caret />{group}</TreeGroup>}
                  {items.map((item) => (
                    <TreeLeaf key={item}>
                      <LeafButton $width={253} $pad={4} $active={item === "天棚"}>{item}</LeafButton>
                    </TreeLeaf>
                  ))}
                </React.Fragment>
              ))}
            </PartList>
            <PartThumb />
          </PartPane>
        </PartColumn>
        <ReportColumn>
          <ReportTools>
            <SelectBox>
              <NativeSelect aria-label="工程量类型" defaultValue="清单工程量">
                <option>清单工程量</option>
              </NativeSelect>
              <SelectCaret $color="#666" />
            </SelectBox>
            <ToolButton><ToolIcon name="classify" />设置分类条件</ToolButton>
            <ToolButton><ToolIcon name="pick" />选择工程量</ToolButton>
            <ToolButton><ToolIcon name="batch" />设置批量导出</ToolButton>
            <CheckLabel><Checkbox type="checkbox" defaultChecked />显示房间、组合构件量</CheckLabel>
          </ReportTools>
          <ReportPane>
            <ReportTable />
            <ReportThumb />
          </ReportPane>
        </ReportColumn>
      </Body>
      <StatusBar>
        <Svg width="11" height="11">
          <path d="M8 0h2v2h-2zM8 4h2v2h-2zM4 4h2v2h-2zM8 8h2v2h-2zM4 8h2v2h-2zM0 8h2v2h-2z" fill="#6b7080" />
        </Svg>
      </StatusBar>
    </Dialog>
  );
}

export default function App() {
  return (
    <Page>
      <GlobalStyle />
      <RibbonBar />
      <OptionBar>
        <Combo $width={57} aria-label="楼层"><span /><Caret $color="#555" /></Combo>
        <Combo $width={125}>装修<Caret $color="#555" /></Combo>
        <Combo $width={125}>吊顶<Caret $color="#555" /></Combo>
      </OptionBar>
      <WorkspaceArea />
      <ReportDialog />
      <Annotations>
        <path d="M1583 142L1567 180l5 1-14 9-1-17 5 4z" />
        <path d="M925 325l24 6v-5l9 14-17 2 4-4z" />
        <path d="M941 405l12 0-1-6 13 10-16 6 3-5z" />
      </Annotations>
    </Page>
  );
}
